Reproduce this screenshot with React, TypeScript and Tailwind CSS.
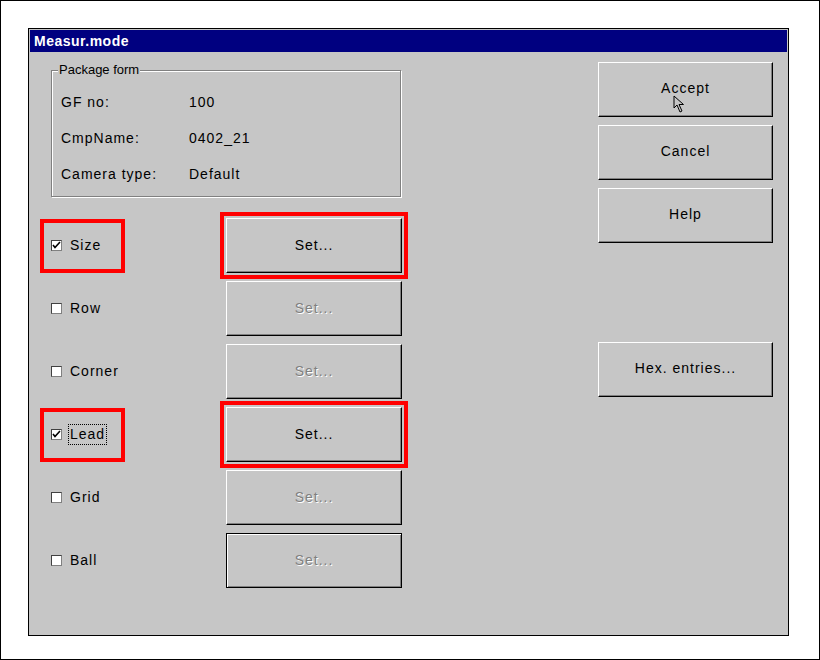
const font = { fontFamily: '"Liberation Sans", Arial, sans-serif' };

const ROWS = [
  { label: "Size", checked: true, enabled: true, marked: true },
  { label: "Row", checked: false, enabled: false, marked: false },
  { label: "Corner", checked: false, enabled: false, marked: false },
  { label: "Lead", checked: true, enabled: true, marked: true, focus: true },
  { label: "Grid", checked: false, enabled: false, marked: false },
  { label: "Ball", checked: false, enabled: false, marked: false, isDefault: true },
];

const raised =
  "border-t border-l border-r border-b border-t-white border-l-white border-r-black border-b-black shadow-[inset_-1px_-1px_0_#808080]";
const defaultBtn = "border border-black shadow-[inset_1px_1px_0_#fff,inset_-1px_-1px_0_#808080]";

function WinButton({ children, disabled, isDefault, marked, className = "" }: {
  children: React.ReactNode; disabled?: boolean; isDefault?: boolean; marked?: boolean; className?: string;
}) {
  return (
    <div
      className={`flex items-center justify-center bg-[#c6c6c6] text-[14px] tracking-[1px] ${
        isDefault ? defaultBtn : raised
      } ${disabled ? "text-[#808080] [text-shadow:1px_1px_0_#fff]" : "text-black"} ${
        marked ? "outline-4 outline-solid outline-[#ff0000] outline-offset-[2px]" : ""
      } ${className}`}
    >
      {children}
    </div>
  );
}

function CheckBox({ checked }: { checked: boolean }) {
  return (
    <div className="w-[11px] h-[11px] bg-white border-t border-l border-t-[#404040] border-l-[#404040] border-r border-b border-r-[#808080] border-b-[#808080] flex items-center justify-center">
      {checked && (
        <svg width="9" height="9" viewBox="0 0 9 9">
          <path d="M1 4 L3 6.5 L8 1" stroke="#000" strokeWidth="1.6" fill="none" />
        </svg>
      )}
    </div>
  );
}

export default function App() {
  return (
    <div className="relative w-[820px] h-[660px] bg-white border border-black p-[27px] box-border" style={font}>
      <div className="w-[761px] h-[608px] border border-black bg-[#c6c6c6] p-[1px] flex flex-col">
        <div className="h-[22px] bg-[#000080] text-white font-bold text-[14px] tracking-[0.5px] pl-[4px] flex items-center">
          Measur.mode
        </div>

        <div className="flex flex-1">
          {/* left column */}
          <div className="pl-[10px] flex flex-col">
            <div className="ml-[11px] mt-[18px] relative w-[350px] h-[127px] border border-[#808080] shadow-[inset_1px_1px_0_#fff,1px_1px_0_#fff] pt-[21px] pl-[9px] flex flex-col gap-[16px]">
              <span className="absolute -top-[9px] left-[6px] px-[1px] bg-[#c6c6c6] text-[13px] leading-[16px] text-black">
                Package form
              </span>
              {[
                ["GF no:", "100"],
                ["CmpName:", "0402_21"],
                ["Camera type:", "Default"],
              ].map(([k, v]) => (
                <div key={k} className="flex items-center h-[20px] text-[14px] tracking-[1px] text-black">
                  <span className="w-[128px]">{k}</span>
                  <span>{v}</span>
                </div>
              ))}
            </div>

            <div className="mt-[21px] flex flex-col gap-[8px]">
              {ROWS.map((r) => (
                <div key={r.label} className="flex items-center h-[55px]">
                  <div
                    className={`w-[85px] h-[54px] border-4 ${
                      r.marked ? "border-[#ff0000]" : "border-transparent"
                    } flex items-center pl-[7px]`}
                  >
                    <CheckBox checked={r.checked} />
                    <span
                      className={`ml-[6px] px-[1px] py-[1px] leading-[17px] border border-dotted text-[14px] tracking-[1px] text-black ${
                        r.focus ? "border-black" : "border-transparent"
                      }`}
                    >
                      {r.label}
                    </span>
                  </div>
                  <WinButton
                    disabled={!r.enabled}
                    isDefault={r.isDefault}
                    marked={r.marked}
                    className="ml-[101px] w-[176px] h-[55px]"
                  >
                    Set...
                  </WinButton>
                </div>
              ))}
            </div>
          </div>

          {/* right column */}
          <div className="ml-auto pr-[14px] pt-[10px] flex flex-col gap-[8px]">
            <WinButton className="w-[175px] h-[55px] pb-[2px]">Accept</WinButton>
            <WinButton className="w-[175px] h-[55px] pb-[2px]">Cancel</WinButton>
            <WinButton className="w-[175px] h-[55px] pb-[2px]">Help</WinButton>
            <WinButton className="w-[175px] h-[55px] pb-[2px] mt-[91px]">Hex. entries...</WinButton>
          </div>
        </div>
      </div>

      {/* mouse pointer */}
      <svg className="absolute left-[672px] top-[94px]" width="13" height="20" viewBox="0 0 13 20">
        <path d="M1 1 L1 13 L4 10 L7 17 L9 16 L6 9.5 L10.5 9.5 Z" fill="#c6c6c6" stroke="#000" strokeWidth="1" />
      </svg>
    </div>
  );
}
